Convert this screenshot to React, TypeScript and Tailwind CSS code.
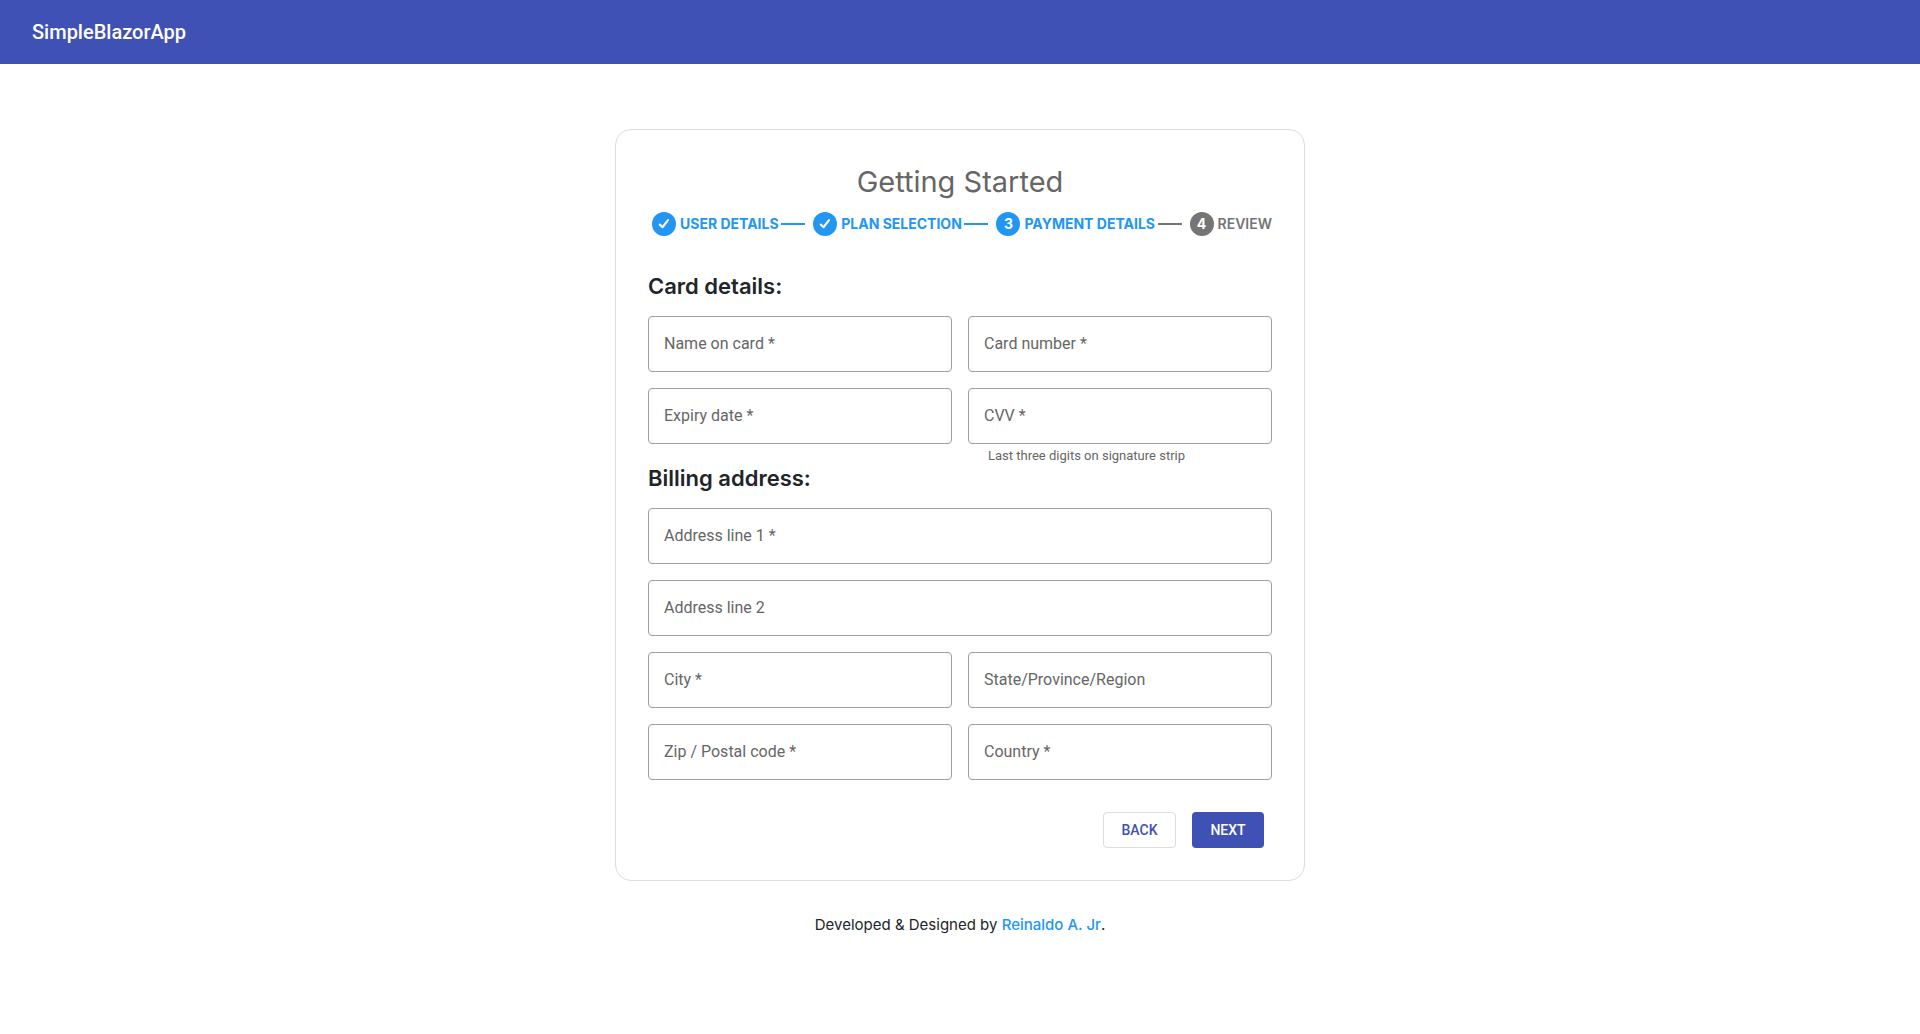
import React from "react";

type FieldProps = {
  id: string;
  label: string;
  required?: boolean;
  wide?: boolean;
  helper?: string;
};

function Field({ id, label, required, wide, helper }: FieldProps) {
  return (
    <div className={wide ? "col-span-2" : "col-span-2 sm:col-span-1"}>
      <div className="grid h-14">
        <input
          id={id}
          type="text"
          placeholder=" "
          required={required}
          aria-describedby={helper ? id + "-help" : undefined}
          className="peer col-start-1 row-start-1 w-full rounded border border-[#9e9e9e] bg-transparent px-4 text-base text-black/85 outline-none focus:border-2 focus:border-[#3f51b5]"
        />
        <label
          htmlFor={id}
          className="pointer-events-none col-start-1 row-start-1 self-center px-4 text-base text-[#666666] peer-focus:invisible peer-[:not(:placeholder-shown)]:invisible"
        >
          {label}
          {required ? " *" : ""}
        </label>
      </div>
      {helper && (
        <p id={id + "-help"} className="mt-1 px-5 text-[13px] leading-4 text-[#666666]">
          {helper}
        </p>
      )}
    </div>
  );
}

const steps = [
  { name: "USER DETAILS", state: "done" },
  { name: "PLAN SELECTION", state: "done" },
  { name: "PAYMENT DETAILS", state: "current" },
  { name: "REVIEW", state: "pending" },
];

function CheckMark() {
  return (
    <svg viewBox="0 0 24 24" className="size-6" fill="none" stroke="#ffffff" strokeWidth="2.2" aria-hidden="true">
      <path d="M7.8 12.6 L10.6 15.2 L16 8.2" strokeLinecap="round" strokeLinejoin="round" />
    </svg>
  );
}

function Stepper() {
  return (
    <ol className="flex items-center justify-between pl-1 font-['Inter',sans-serif] text-sm leading-6 font-bold">
      {steps.map((step, i) => {
        const pending = step.state === "pending";
        return (
          <li key={step.name} className="flex items-center gap-1">
            {i > 0 && <span className={pending ? "mr-1 h-0.5 w-6 bg-[#757575]" : "mr-1 h-0.5 w-6 bg-[#2196f3]"} />}
            <span
              className={
                pending
                  ? "flex size-6 items-center justify-center rounded-full bg-[#757575] text-white"
                  : "flex size-6 items-center justify-center rounded-full bg-[#2196f3] text-white"
              }
            >
              {step.state === "done" ? <CheckMark /> : i + 1}
            </span>
            <span className={pending ? "font-semibold text-[#757575]" : "text-[#2196f3]"}>{step.name}</span>
          </li>
        );
      })}
    </ol>
  );
}

export default function App() {
  return (
    <div className="min-h-screen bg-white font-['Roboto',sans-serif]">
      <header className="flex h-16 items-center bg-[#3f51b5] px-8">
        <span className="text-xl font-medium text-white">SimpleBlazorApp</span>
      </header>

      <main className="mx-auto mt-[65px] w-full max-w-[690px] rounded-2xl border border-[#dddddd] p-8">
        <h1 className="text-center font-['Inter',sans-serif] text-[29px] leading-10 font-normal text-[#666666]">
          Getting Started
        </h1>
        <div className="mt-2.5">
          <Stepper />
        </div>

        <form onSubmit={(e) => e.preventDefault()}>
          <h2 className="mt-9 font-['Inter',sans-serif] text-[22px] leading-7 font-semibold text-[#212529]">
            Card details:
          </h2>
          <div className="mt-4 grid grid-cols-2 gap-4">
            <Field id="card-name" label="Name on card" required />
            <Field id="card-number" label="Card number" required />
            <Field id="expiry" label="Expiry date" required />
            <Field id="cvv" label="CVV" required helper="Last three digits on signature strip" />
          </div>

          <h2 className="font-['Inter',sans-serif] text-[22px] leading-7 font-semibold text-[#212529]">
            Billing address:
          </h2>
          <div className="mt-4 grid grid-cols-2 gap-4">
            <Field id="address-1" label="Address line 1" required wide />
            <Field id="address-2" label="Address line 2" wide />
            <Field id="city" label="City" required />
            <Field id="state" label="State/Province/Region" />
            <Field id="zip" label="Zip / Postal code" required />
            <Field id="country" label="Country" required />
          </div>

          <div className="mt-8 flex justify-end gap-4 pr-2">
            <button
              type="button"
              className="h-9 min-w-[73px] rounded border border-[#dddddd] text-sm font-medium text-[#3f51b5]"
            >
              BACK
            </button>
            <button type="submit" className="h-9 min-w-[72px] rounded bg-[#3f51b5] text-sm font-medium text-white">
              NEXT
            </button>
          </div>
        </form>
      </main>

      <footer className="mt-8 text-center font-['Inter',sans-serif] text-[15px] leading-6 text-[#212529]">
        Developed &amp; Designed by{" "}
        <a href="#" className="font-medium text-[#2196f3]">
          Reinaldo A. Jr
        </a>
        .
      </footer>
    </div>
  );
}
